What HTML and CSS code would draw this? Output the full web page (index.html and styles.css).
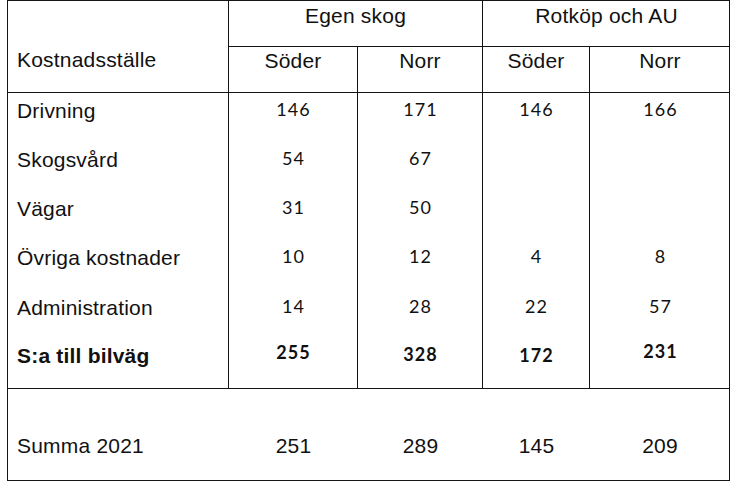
FILE: index.html
```html
<!DOCTYPE html>
<html lang="sv">
<head>
<meta charset="utf-8">
<title>Kostnadsställe</title>
<link rel="stylesheet" href="styles.css">
</head>
<body>
<div class="sheet">
  <div class="cell head label-head br">Kostnadsställe</div>
  <div class="cell head group br bb">Egen skog</div>
  <div class="cell head group bb">Rotköp och AU</div>
  <div class="cell head sub br">Söder</div>
  <div class="cell head sub br">Norr</div>
  <div class="cell head sub br">Söder</div>
  <div class="cell head sub">Norr</div>

  <div class="cell label br">Drivning</div>
  <div class="cell num br">146</div>
  <div class="cell num br">171</div>
  <div class="cell num br">146</div>
  <div class="cell num">166</div>

  <div class="cell label br">Skogsvård</div>
  <div class="cell num br">54</div>
  <div class="cell num br">67</div>
  <div class="cell num br"></div>
  <div class="cell num"></div>

  <div class="cell label br">Vägar</div>
  <div class="cell num br">31</div>
  <div class="cell num br">50</div>
  <div class="cell num br"></div>
  <div class="cell num"></div>

  <div class="cell label br">Övriga kostnader</div>
  <div class="cell num br">10</div>
  <div class="cell num br">12</div>
  <div class="cell num br">4</div>
  <div class="cell num">8</div>

  <div class="cell label br">Administration</div>
  <div class="cell num br">14</div>
  <div class="cell num br">28</div>
  <div class="cell num br">22</div>
  <div class="cell num">57</div>

  <div class="cell label total br bb">S:a till bilväg</div>
  <div class="cell num total br bb t-255">255</div>
  <div class="cell num total br bb t-328">328</div>
  <div class="cell num total br bb t-172">172</div>
  <div class="cell num total bb t-231">231</div>

  <div class="cell label summa">Summa 2021</div>
  <div class="cell sumnum summa">251</div>
  <div class="cell sumnum summa">289</div>
  <div class="cell sumnum summa">145</div>
  <div class="cell sumnum summa">209</div>
</div>
</body>
</html>
```

FILE: styles.css
```css
html, body {
  margin: 0;
  padding: 0;
  background: #ffffff;
}

body {
  padding-left: 7px;
  font-family: "Liberation Sans", Arial, sans-serif;
  color: #111111;
}

.sheet {
  display: grid;
  grid-template-columns: 221px 129px 125px 107px 140px;
  grid-template-rows: 46px 46px 49px 49px 49px 50px 49px 50px 91px;
  width: 723px;
  box-sizing: border-box;
  border: 1px solid #141414;
}

.cell {
  box-sizing: border-box;
  font-size: 21px;
  line-height: 24px;
  letter-spacing: 0.2px;
  white-space: nowrap;
}

.br { border-right: 1px solid #141414; }
.bb { border-bottom: 1px solid #141414; }

.label-head {
  grid-row: 1 / span 2;
  padding-left: 9px;
  padding-top: 47px;
  border-bottom: 1px solid #141414;
}

.group {
  grid-column: span 2;
  text-align: center;
  padding-top: 3px;
}

.sub {
  text-align: center;
  padding-top: 2px;
  border-bottom: 1px solid #141414;
}

.label {
  padding-left: 9px;
  padding-top: 6px;
}

.num {
  font-family: Lato, "Liberation Sans", sans-serif;
  font-size: 18px;
  line-height: 24px;
  letter-spacing: 1px;
  text-indent: 1px;
  text-align: center;
  padding-top: 4px;
}

.label.total {
  font-weight: bold;
  padding-top: 5px;
}

.num.total {
  font-weight: bold;
  padding-top: 2px;
}

.num.t-255 { padding-top: 1px; }
.num.t-328 { padding-top: 3px; }
.num.t-172 { padding-top: 4px; }
.num.t-231 { padding-top: 0; }

.cell.summa {
  padding-top: 45px;
}

.sumnum {
  text-align: center;
}
```
